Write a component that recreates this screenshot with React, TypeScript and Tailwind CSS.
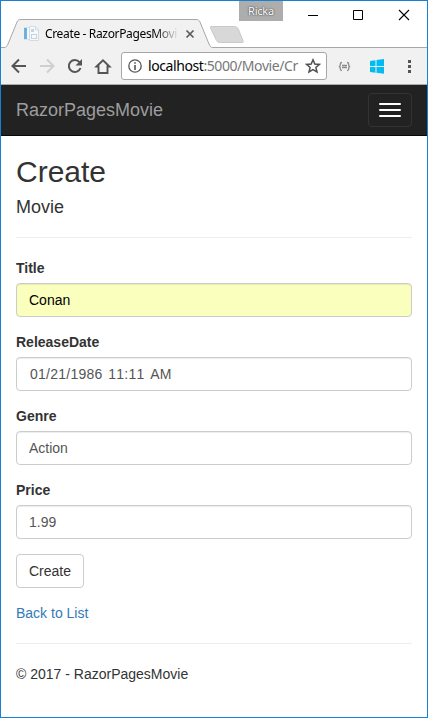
import React from "react";

const uiFont = "font-['Noto_Sans','Open_Sans',sans-serif]";

function Favicon() {
  return (
    <svg className="mt-[7px] shrink-0" width="17" height="17" viewBox="0 0 17 17">
      <rect x="1.500" y="1.500" width="9" height="12" fill="#f3f8fc" stroke="#d5e2ec" />
      <rect x="1" y="2" width="3" height="11" fill="#6fb0dc" />
      <path d="M6.500.5h6l3 3v11h-9z" fill="#f7fafc" stroke="#d0dbe4" />
      <path d="M8 3h3v3H8zM8 8h6v1H8zM8 9h1v3H8zM13 9h1v3h-1zM8 12h6v1H8z" fill="#c3d4e0" />
      <path d="M12.500 1v3h3" fill="none" stroke="#d0dbe4" />
    </svg>
  );
}

function TabStrip() {
  return (
    <div className={`relative flex h-[47px] bg-white ${uiFont}`}>
      <svg className="absolute left-0 top-0" width="426" height="47" viewBox="1 1 426 47">
        <path d="M1 48V47.500H4C6 47.500 7 46.500 8 44L17 22C18 20 19 19.500 21 19.500H196C198 19.500 199 20 200 22L209 44C210 46.500 211 47.500 213 47.500H427V48Z" fill="#f1f1f1" />
        <path d="M1 47.500H4C6 47.500 7 46.500 8 44L17 22C18 20 19 19.500 21 19.500H196C198 19.500 199 20 200 22L209 44C210 46.500 211 47.500 213 47.500H427" fill="none" stroke="#a8a8a8" />
        <path d="M211 26.500H234.500Q237 26.500 238 28.500L243 40.500Q244 42.500 242 42.500H220Q217.500 42.500 216.500 40.500L210.500 28Q210 26.500 211 26.500Z" fill="#d8d8d8" stroke="#c9c9c9" />
        <path d="M186.500 30.500l7 7M193.500 30.500l-7 7" stroke="#5a5a5a" strokeWidth="1.700" />
        <path d="M308 15.500h10" stroke="#000" />
        <path d="M353.500 10.500h9v9h-9z" fill="none" stroke="#000" />
        <path d="M399 10l10 10M409 10l-10 10" stroke="#000" strokeWidth="1.100" />
      </svg>
      <div className="relative mt-[18px] flex h-7 w-[160px] pl-[22px]">
        <Favicon />
        <span className="ml-[5px] mt-[7px] w-[134px] shrink-0 whitespace-nowrap text-[12px] leading-4 tracking-[-0.35px] text-black [mask-image:linear-gradient(to_right,black_82%,transparent)]">
          Create - RazorPagesMovi
        </span>
      </div>
      <div className="relative ml-[78px] flex h-5 w-11 items-center justify-center bg-[#adadad] text-[11px] tracking-[-0.2px] text-white [text-shadow:0_0_2px_#444,0_0_1px_#444]">
        Ricka
      </div>
    </div>
  );
}

function Toolbar() {
  return (
    <div className={`flex h-[37px] items-center border-b border-[#aaa] bg-[#f1f1f1] pl-[10px] ${uiFont}`}>
      <svg className="shrink-0" width="102" height="30" viewBox="11 51 102 30" fill="none" stroke="#555" strokeWidth="2">
        <path d="M26 66H13M19 59.500L12.500 66L19 72.500" />
        <path d="M40 66h13M47 59.500L53.500 66L47 72.500" stroke="#cfcfcf" />
        <path d="M79.500 62.200A6 6 0 1 0 80.500 68" />
        <path d="M82 59v6.500h-6.500z" fill="#555" stroke="none" />
        <path d="M96.500 66.500L103 60.200L109.500 66.500H107.500V73H98.500V66.500Z" strokeWidth="1.900" />
      </svg>
      <div className="ml-[8px] flex h-7 w-[206px] shrink-0 items-center rounded-[3px] border border-[#a6a6a6] bg-white pl-[6px]">
        <svg className="shrink-0" width="14" height="14" viewBox="0 0 14 14">
          <circle cx="7" cy="7" r="6.200" fill="none" stroke="#555" strokeWidth="1.300" />
          <path d="M6.200 3.200h1.600v1.600H6.200zM6.200 6h1.600v5H6.200z" fill="#555" />
        </svg>
        <span className="ml-[6px] w-[150px] whitespace-nowrap text-[14px] leading-5 tracking-[-0.42px] text-[#777]">
          <span className="text-black">localhost</span>:5000/Movie/Cr
        </span>
        <svg className="ml-[7px] shrink-0" width="16" height="16" viewBox="0 0 16 16">
          <path d="M8 1.800L9.800 6l4.600.4-3.500 3 1.100 4.500L8 11.500l-4 2.400 1.100-4.500-3.500-3L6.200 6z" fill="none" stroke="#505050" strokeWidth="1.500" />
        </svg>
      </div>
      <svg className="shrink-0" width="99" height="30" viewBox="327 51 99 30">
        <path d="M342 62.500q-1.700 0-1.700 1.500v1q0 1.500-1.500 1.500q1.500 0 1.500 1.500v1q0 1.500 1.700 1.500M347 62.500q1.700 0 1.700 1.500v1q0 1.500 1.500 1.500q-1.500 0-1.500 1.500v1q0 1.500-1.700 1.500M342 65.500h5M342 67.500h5" fill="none" stroke="#8c8c8c" strokeWidth="1.300" />
        <path d="M370 61l5.500-.8V66H370zM376.500 60l7.500-1v7h-7.500zM370 67h5.500v5.800l-5.500-.8zM376.500 67H384v6.800l-7.500-1z" fill="#00bcf2" />
        <path d="M408 60h3v3h-3zM408 65h3v3h-3zM408 70h3v3h-3z" fill="#555" />
      </svg>
    </div>
  );
}

function Field({ label, value, autofill = false, className = "px-3" }: {
  label: string;
  value: string;
  autofill?: boolean;
  className?: string;
}) {
  return (
    <div className="mb-[15px]">
      <label className="mb-[5px] block font-bold leading-5">{label}</label>
      <input
        type="text"
        defaultValue={value}
        className={`block h-[34px] w-full rounded border border-[#ccc] shadow-[inset_0_1px_1px_rgba(0,0,0,0.075)] outline-none ${autofill ? "bg-[#faffbd] text-black" : "bg-white text-[#555]"} ${className}`}
      />
    </div>
  );
}

export default function App() {
  return (
    <div className="flex h-[718px] w-[428px] flex-col overflow-hidden border border-[#1a80d4] bg-white font-['Liberation_Sans',Arial,sans-serif] text-[14px] leading-5 text-[#333]">
      <TabStrip />
      <Toolbar />
      <nav className="flex h-[51px] shrink-0 items-start justify-between border-b border-[#080808] bg-[#222] px-[15px] pt-2">
        <span className="mt-[7px] text-[18px] leading-5 text-[#9d9d9d]">RazorPagesMovie</span>
        <button aria-label="Menu" className="flex h-[34px] w-11 flex-col items-center justify-center gap-1 rounded border border-[#333]">
          <span className="h-0.5 w-[22px] rounded-[1px] bg-white" />
          <span className="h-0.5 w-[22px] rounded-[1px] bg-white" />
          <span className="h-0.5 w-[22px] rounded-[1px] bg-white" />
        </button>
      </nav>
      <main className="px-[15px] pt-[19px]">
        <h2 className="text-[30px] leading-[33px]">Create</h2>
        <h4 className="mt-[9px] text-[18px] leading-5">Movie</h4>
        <hr className="my-5 border-[#eee]" />
        <Field label="Title" value="Conan" autofill />
        <Field label="ReleaseDate" value="01/21/1986 11:11 AM" className="pl-[13px] pr-3 tracking-[0.25px] [font-kerning:none] [word-spacing:1.5px]" />
        <Field label="Genre" value="Action" />
        <Field label="Price" value="1.99" />
        <button className="block h-[34px] w-[68px] rounded border border-[#ccc] bg-white">Create</button>
        <a className="mt-[15px] block text-[#337ab7]">Back to List</a>
        <hr className="my-5 border-[#eee]" />
        <p>© 2017 - RazorPagesMovie</p>
      </main>
    </div>
  );
}
